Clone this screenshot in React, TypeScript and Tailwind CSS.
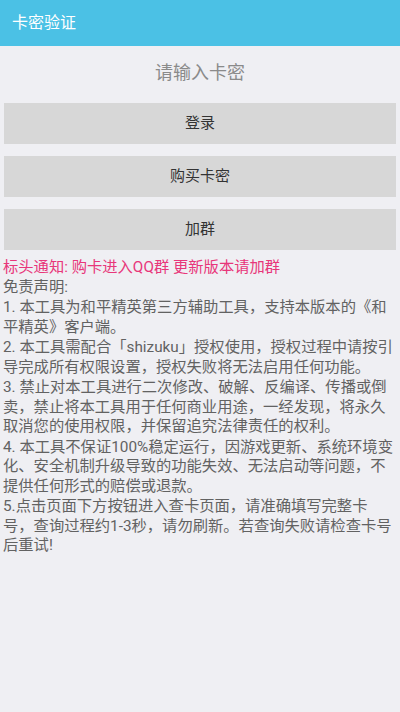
import React from 'react'

const notes = [
  '1. 本工具为和平精英第三方辅助工具，支持本版本的《和平精英》客户端。',
  '2. 本工具需配合「shizuku」授权使用，授权过程中请按引导完成所有权限设置，授权失败将无法启用任何功能。',
  '3. 禁止对本工具进行二次修改、破解、反编译、传播或倒卖，禁止将本工具用于任何商业用途，一经发现，将永久取消您的使用权限，并保留追究法律责任的权利。',
  '4. 本工具不保证100%稳定运行，因游戏更新、系统环境变化、安全机制升级导致的功能失效、无法启动等问题，不提供任何形式的赔偿或退款。',
  '5.点击页面下方按钮进入查卡页面，请准确填写完整卡号，查询过程约1-3秒，请勿刷新。若查询失败请检查卡号后重试!',
]

export default function App() {
  return (
    <div
      className="w-[400px] h-[712px] bg-[#efeff3] overflow-hidden"
      style={{ fontFamily: 'Roboto, "Noto Sans CJK SC", sans-serif' }}
    >
      {/* Title bar */}
      <div className="h-[46px] bg-[#4bc1e5] flex items-center px-[12px]">
        <span className="text-white text-[16px]">卡密验证</span>
      </div>

      {/* Card input */}
      <input
        className="w-full h-[52px] bg-transparent text-center text-[18px] text-[#444] placeholder:text-[#8a8a8a] outline-none"
        placeholder="请输入卡密"
      />

      {/* Buttons */}
      <div className="px-[4px] pt-[5px] flex flex-col gap-[12px]">
        <button className="h-[41px] bg-[#d7d7d7] text-[15px] text-[#333]">登录</button>
        <button className="h-[41px] bg-[#d7d7d7] text-[15px] text-[#333]">购买卡密</button>
        <button className="h-[41px] bg-[#d7d7d7] text-[15px] text-[#333]">加群</button>
      </div>

      {/* Notice */}
      <div className="pl-[3px] pr-[5px] pt-[7px]">
        <p className="text-[15.3px] leading-[20px] text-[#e8367a]">标头通知: 购卡进入QQ群 更新版本请加群</p>
        <p className="text-[15.3px] leading-[20px] text-[#626262]">免责声明:</p>
        <div className="flex flex-col gap-[1px] mt-[1px]">
          {notes.map((n, i) => (
            <p key={i} className="text-[15.3px] leading-[19.5px] text-[#626262]">
              {n}
            </p>
          ))}
        </div>
      </div>
    </div>
  )
}
